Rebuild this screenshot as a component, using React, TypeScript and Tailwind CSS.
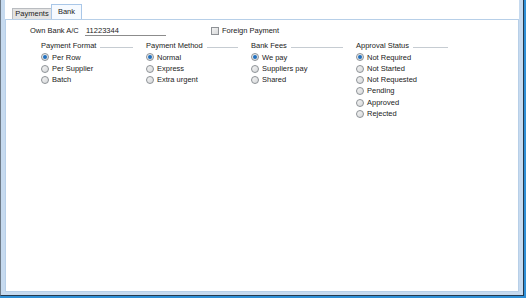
import React from "react";

type Col = { title: string; items: string[]; checked: number };

const cols: Col[] = [
  { title: "Payment Format", items: ["Per Row", "Per Supplier", "Batch"], checked: 0 },
  { title: "Payment Method", items: ["Normal", "Express", "Extra urgent"], checked: 0 },
  { title: "Bank Fees", items: ["We pay", "Suppliers pay", "Shared"], checked: 0 },
  {
    title: "Approval Status",
    items: ["Not Required", "Not Started", "Not Requested", "Pending", "Approved", "Rejected"],
    checked: 0,
  },
];

function Radio({ checked }: { checked: boolean }) {
  return (
    <div className="w-[8px] h-[8px] rounded-full border border-[#8d9296] bg-gradient-to-br from-[#f4f4f4] to-[#d6d8da] flex items-center justify-center shrink-0">
      {checked && <div className="w-[4px] h-[4px] rounded-full bg-[#1f6fbf]" />}
    </div>
  );
}

export default function App() {
  return (
    <div className="w-[526px] h-[298px] border-r-2 border-b-2 border-r-[#2f8fd6] border-b-[#2f8fd6] font-['Liberation_Sans',Arial,sans-serif] text-[7.5px] text-[#1b1b1b]">
      <div className="h-full flex flex-col border-l border-r border-b border-l-[#6e7b88] border-r-[#23394e] border-b-[#23394e] bg-[#c6daef] pl-[4px] pr-[4px] pb-[3px]">
        <div className="flex-1 bg-white flex flex-col">
          {/* tab strip */}
          <div className="h-[19px] flex items-end pl-[7px] shrink-0">
            <div className="h-[11px] w-[40px] bg-[#e3e3e3] border border-b-0 border-[#b9bcc0] flex items-center justify-center leading-none">
              Payments
            </div>
            <div className="h-[15px] w-[31px] bg-[#f6faff] border border-b-0 border-[#a9c7e8] flex items-center justify-center leading-none -ml-px">
              Bank
            </div>
          </div>
          {/* panel */}
          <div className="flex-1 border border-[#b7cfe8] bg-white pt-[5px]">
            <div className="flex items-center h-[11px] pl-[24px]">
              <div className="w-[55px] leading-none">Own Bank A/C</div>
              <div className="w-[81px] h-[10px] border-b border-[#8c8c8c] pl-[1px] leading-[10px]">11223344</div>
              <div className="ml-[45px] flex items-center">
                <div className="w-[8px] h-[8px] border border-[#8f9296] bg-gradient-to-br from-[#f2f2f2] to-[#d9dadb]" />
                <span className="ml-[3px] leading-none">Foreign Payment</span>
              </div>
            </div>
            <div className="flex pl-[35px] mt-[4.4px]">
              {cols.map((c) => (
                <div key={c.title} className="w-[105px] flex flex-col">
                  <div className="h-[11.3px] flex items-center">
                    <span className="leading-none whitespace-nowrap">{c.title}</span>
                    <div className="flex-1 ml-[4px] mr-[13px] h-px bg-[#c6ccd2] mt-[3px]" />
                  </div>
                  {c.items.map((it, i) => (
                    <div key={it} className="h-[11.3px] flex items-center">
                      <Radio checked={i === c.checked} />
                      <span className="ml-[3px] leading-none whitespace-nowrap">{it}</span>
                    </div>
                  ))}
                </div>
              ))}
            </div>
          </div>
        </div>
      </div>
    </div>
  );
}
